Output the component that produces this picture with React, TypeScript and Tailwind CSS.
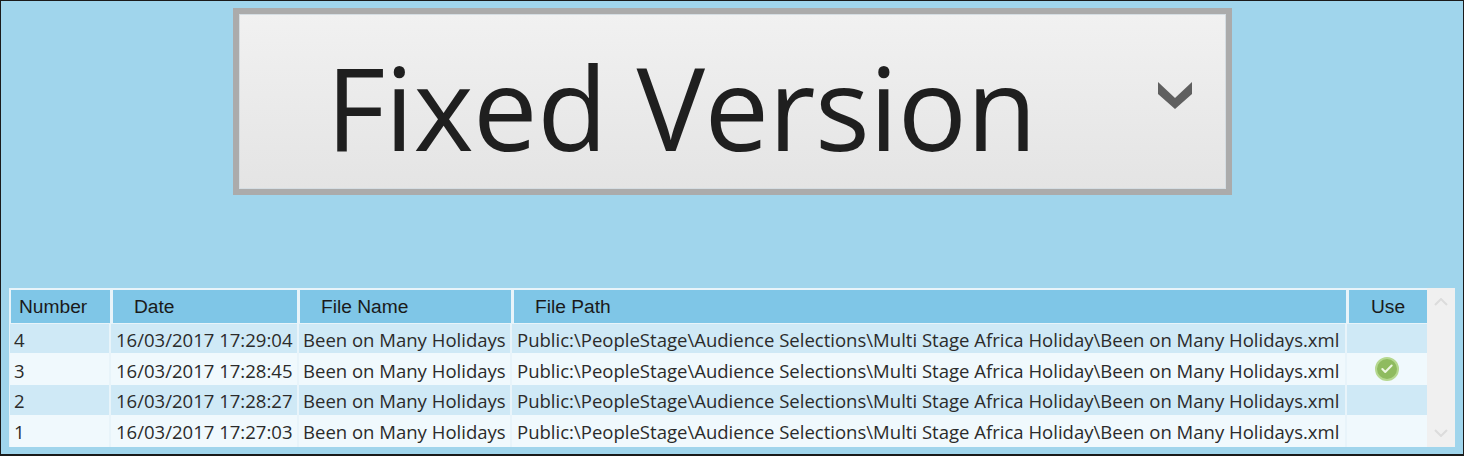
import React from 'react';
import { Check } from 'lucide-react';

const rows = [
  { number: '4', date: '16/03/2017 17:29:04', h: 'grid-rows-[29px]', lead: 'leading-[32px]', bg: 'bg-[#cfe9f6]', used: false },
  { number: '3', date: '16/03/2017 17:28:45', h: 'grid-rows-[32px]', lead: 'leading-[35px]', bg: 'bg-[#f0f9fd]', used: true },
  { number: '2', date: '16/03/2017 17:28:27', h: 'grid-rows-[30px]', lead: 'leading-[32px]', bg: 'bg-[#cfe9f6]', used: false },
  { number: '1', date: '16/03/2017 17:27:03', h: 'grid-rows-[32px]', lead: 'leading-[34px]', bg: 'bg-[#f0f9fd]', used: false },
];

const fileName = 'Been on Many Holidays';
const filePath = 'Public:\\PeopleStage\\Audience Selections\\Multi Stage Africa Holiday\\Been on Many Holidays.xml';

function VersionSelect() {
  return (
    <div className="ml-[232px] mt-[7px] flex h-[187px] w-[999px] items-center border-[6px] border-[#ababab] bg-gradient-to-b from-[#f1f1f1] to-[#e4e4e4] pl-[87px] pr-[34px] shadow-[inset_0_0_0_1px_#d5dde2]">
      <span className="flex-1 pt-[9px] text-[115px] leading-none tracking-[-0.5px] text-[#1f1f1f] font-['Open_Sans',sans-serif]">Fixed Version</span>
      <svg width="34" height="27" viewBox="0 0 34 27" className="mb-[12px]">
        <path d="M0 0L17 16L34 0V12L17 27L0 12Z" fill="#5f5f5f" />
      </svg>
    </div>
  );
}

function VersionTable() {
  return (
    <div className="ml-[8px] mt-[93px] flex h-[159px] w-[1446px] font-['Open_Sans',sans-serif] text-[#2b2b2b]">
      <div className="w-[1418px] border-l border-t-2 border-[#e8f4fa] bg-[#f0f9fd]">
        <div className="grid h-[34px] grid-cols-[102px_187px_214px_835px_78px] border-b-2 border-[#e8f4fa] bg-[#e8f4fa] pl-[1px] text-[19.2px] leading-[33px] text-[#1a1a1a] font-['Liberation_Sans',sans-serif]">
          <div className="mr-[3px] bg-[#7fc6e7] pl-[8px]">Number</div>
          <div className="mr-[3px] bg-[#7fc6e7] pl-[21px]">Date</div>
          <div className="mr-[3px] bg-[#7fc6e7] pl-[21px]">File Name</div>
          <div className="mr-[3px] bg-[#7fc6e7] pl-[21px]">File Path</div>
          <div className="bg-[#7fc6e7] text-center">Use</div>
        </div>
        {rows.map((row) => (
          <div key={row.number} className={`grid grid-cols-[101px_188px_213px_835px_80px] ${row.h} ${row.lead} ${row.bg} text-[18.55px] whitespace-nowrap`}>
            <div className="border-r-2 border-[#e8f4fa] pl-[4px]">{row.number}</div>
            <div className="border-r-2 border-[#e8f4fa] pl-[5px]">{row.date}</div>
            <div className="border-r-2 border-[#e8f4fa] pl-[4px]">{fileName}</div>
            <div className="border-r-2 border-[#e8f4fa] pl-[5px]">{filePath}</div>
            <div className="flex items-center justify-center">
              {row.used && (
                <span className="flex h-[24px] w-[24px] items-center justify-center rounded-full border-2 border-[#b5d88f] bg-[#8fbb5f]">
                  <Check size={14} strokeWidth={3.5} className="text-[#eef7e2]" />
                </span>
              )}
            </div>
          </div>
        ))}
      </div>
      <div className="flex w-[28px] flex-col items-center justify-between bg-[#f0f0f0] py-[10px] text-[#dcdcdc]">
        <svg width="14" height="8" viewBox="0 0 14 8" fill="none" stroke="currentColor" strokeWidth="2"><path d="M1 7L7 1L13 7" /></svg>
        <svg width="14" height="8" viewBox="0 0 14 8" fill="none" stroke="currentColor" strokeWidth="2"><path d="M1 1L7 7L13 1" /></svg>
      </div>
    </div>
  );
}

export default function App() {
  return (
    <div className="h-[456px] w-[1464px] overflow-hidden border border-b-2 border-[#1a1a1a] bg-[#a0d5ec]">
      <VersionSelect />
      <VersionTable />
    </div>
  );
}
